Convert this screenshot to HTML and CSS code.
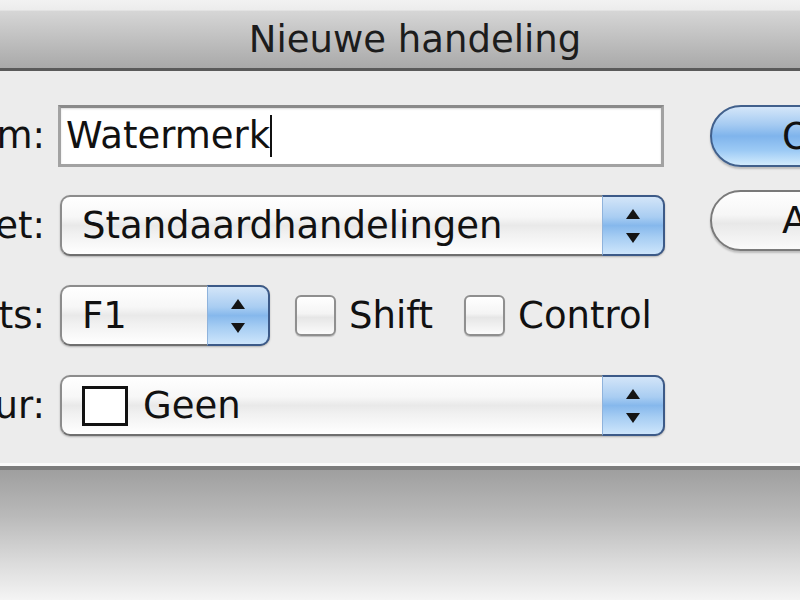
FILE: index.html
```html
<!DOCTYPE html>
<html>
<head>
<meta charset="utf-8">
<title>Nieuwe handeling</title>
<link rel="stylesheet" href="styles.css">
</head>
<body>
<div class="top-strip"></div>
<div class="dialog">
  <div class="titlebar"><span class="title">Nieuwe handeling</span></div>
  <div class="content">
    <div class="form">
      <div class="row">
        <div class="label"><span>Naam:</span></div>
        <div class="field"><span>Watermerk</span><span class="caret"></span></div>
      </div>
      <div class="row">
        <div class="label"><span>Set:</span></div>
        <div class="popup wide">
          <span class="popup-text">Standaardhandelingen</span>
          <span class="arrows"><svg width="16" height="34" viewBox="0 0 16 34"><polygon points="8,0 15,10 1,10" fill="#141414"/><polygon points="1,24 15,24 8,34" fill="#141414"/></svg></span>
        </div>
      </div>
      <div class="row">
        <div class="label"><span>Functietoets:</span></div>
        <div class="popup short">
          <span class="popup-text">F1</span>
          <span class="arrows"><svg width="16" height="34" viewBox="0 0 16 34"><polygon points="8,0 15,10 1,10" fill="#141414"/><polygon points="1,24 15,24 8,34" fill="#141414"/></svg></span>
        </div>
        <span class="check first"></span><span class="check-label">Shift</span>
        <span class="check second"></span><span class="check-label">Control</span>
      </div>
      <div class="row">
        <div class="label"><span>Kleur:</span></div>
        <div class="popup wide">
          <span class="popup-text"><span class="swatch"></span>Geen</span>
          <span class="arrows"><svg width="16" height="34" viewBox="0 0 16 34"><polygon points="8,0 15,10 1,10" fill="#141414"/><polygon points="1,24 15,24 8,34" fill="#141414"/></svg></span>
        </div>
      </div>
    </div>
    <div class="buttons">
      <div class="btn primary">Opnemen</div>
      <div class="btn">Annuleren</div>
    </div>
  </div>
</div>
<div class="shadow"></div>
</body>
</html>
```

FILE: styles.css
```css
html, body {
  margin: 0;
  padding: 0;
}
body {
  width: 800px;
  height: 600px;
  overflow: hidden;
  background: #f4f4f4;
  font-family: "DejaVu Sans", "Liberation Sans", sans-serif;
  font-size: 37px;
  color: #111;
}
.top-strip {
  height: 10px;
  background: linear-gradient(#f2f2f2, #ececec);
}
.titlebar {
  height: 57px;
  border-top: 1px solid #e2e2e2;
  border-bottom: 3px solid #5a5a5a;
  box-shadow: 0 3px 0 #dcdcdc;
  background: linear-gradient(#d6d6d6, #c4c4c4 40%, #a9a9a9);
  display: flex;
  align-items: center;
  justify-content: center;
  padding-left: 30px;
  font-size: 37px;
  color: #1c1c1c;
}
.content {
  display: flex;
  background: #ececec;
  padding: 34px 0 27px 0;
  border-bottom: 3px solid #fafafa;
}
.form {
  display: flex;
  flex-direction: column;
  gap: 29px;
  width: 665px;
  flex: none;
}
.row {
  display: flex;
  align-items: center;
  height: 61px;
}
.label {
  width: 45px;
  flex: none;
  display: flex;
  justify-content: flex-end;
  overflow: hidden;
  white-space: nowrap;
  margin-right: 13px;
}
.field {
  box-sizing: border-box;
  width: 606px;
  height: 62px;
  background: #fff;
  border: 3px solid #a2a2a2;
  border-top-color: #8a8a8a;
  box-shadow: inset 0 1px 2px rgba(0,0,0,0.15);
  display: flex;
  align-items: center;
  padding-left: 5px;
}
.caret {
  display: inline-block;
  width: 2px;
  height: 42px;
  background: #111;
  margin-left: 0;
}
.popup {
  box-sizing: border-box;
  height: 61px;
  margin-left: 2px;
  border: 2px solid #8c8c8c;
  border-bottom-color: #6f6f6f;
  border-radius: 10px;
  background: linear-gradient(#ffffff, #f7f7f7 35%, #e9e9e9 50%, #f1f1f1 65%, #ffffff);
  box-shadow: 0 1px 2px rgba(0,0,0,0.25);
  display: flex;
  align-items: stretch;
}
.popup.wide { width: 605px; }
.popup.short { width: 210px; }
.popup-text {
  flex: 1;
  display: flex;
  align-items: center;
  padding-left: 20px;
  white-space: nowrap;
}
.arrows {
  width: 60px;
  margin: -2px -2px -2px 0;
  border: 2px solid #3c5a88;
  border-left: 1px solid #8fb3dc;
  border-radius: 0 10px 10px 0;
  background: linear-gradient(#d3e5f8, #a9cdf2 35%, #86b8ec 50%, #a6cdf3 70%, #cde5fb);
  display: flex;
  align-items: center;
  justify-content: center;
}
.swatch {
  display: inline-block;
  box-sizing: border-box;
  width: 46px;
  height: 40px;
  border: 3px solid #111;
  background: #fff;
  margin-right: 15px;
}
.check {
  box-sizing: border-box;
  width: 41px;
  height: 41px;
  flex: none;
  border: 2px solid #8f8f8f;
  border-radius: 6px;
  background: linear-gradient(#ffffff, #f4f4f4 45%, #e6e6e6 55%, #fbfbfb);
  box-shadow: 0 1px 1px rgba(0,0,0,0.2);
}
.check.first { margin-left: 25px; }
.check.second { margin-left: 31px; }
.check-label {
  margin-left: 13px;
  white-space: nowrap;
}
.buttons {
  display: flex;
  flex-direction: column;
  gap: 23px;
  margin-left: 45px;
}
.btn {
  box-sizing: border-box;
  width: 240px;
  height: 61px;
  border: 2px solid #7a7a7a;
  border-radius: 31px;
  background: linear-gradient(#ffffff, #f6f6f6 40%, #e8e8e8 55%, #fafafa);
  box-shadow: 0 2px 2px rgba(0,0,0,0.2);
  display: flex;
  align-items: center;
  padding-left: 70px;
  white-space: nowrap;
}
.btn.primary {
  height: 62px;
  border-color: #41608c;
  background: linear-gradient(#d4e6f9, #a6cbf2 30%, #7fb4ec 50%, #9ccaf5 75%, #d2ebfd);
}
.shadow {
  height: 130px;
  border-top: 4px solid #7c7c7c;
  background: linear-gradient(#9f9f9f, #b9b9b9 35%, #dadada 70%, #f4f4f4);
}
```
